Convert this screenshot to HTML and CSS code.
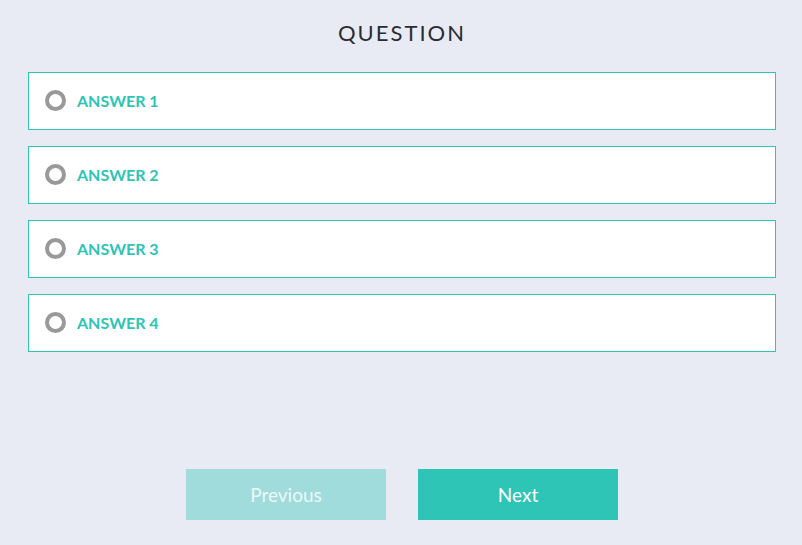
FILE: index.html
```html
<!DOCTYPE html>
<html lang="en">
<head>
    <meta charset="UTF-8">
    <title>Quiz</title>
    <link rel="stylesheet" href="styles.css">
</head>
<body>
    <div class="quiz">
        <h1 class="question">Question</h1>

        <div class="answers">
            <label class="answer">
                <span class="radio"></span>
                <span class="answer-text">Answer 1</span>
            </label>
            <label class="answer">
                <span class="radio"></span>
                <span class="answer-text">Answer 2</span>
            </label>
            <label class="answer">
                <span class="radio"></span>
                <span class="answer-text">Answer 3</span>
            </label>
            <label class="answer">
                <span class="radio"></span>
                <span class="answer-text">Answer 4</span>
            </label>
        </div>

        <div class="nav">
            <button class="btn btn-prev">Previous</button>
            <button class="btn btn-next">Next</button>
        </div>
    </div>
</body>
</html>
```

FILE: styles.css
```css
body {
    margin: 0;
    background: #e8ebf3;
    font-family: Lato, "Open Sans", sans-serif;
}
.quiz {
    padding: 19px 26px 0 28px;
}
.question {
    margin: 0;
    text-align: center;
    font-size: 22px;
    font-weight: 400;
    letter-spacing: 2px;
    text-transform: uppercase;
    color: #2b2b33;
    line-height: 28px;
}
.answers {
    margin-top: 25px;
    display: flex;
    flex-direction: column;
    gap: 16px;
}
.answer {
    display: flex;
    align-items: center;
    height: 56px;
    background: white;
    border: 1px solid #2ec4b6;
    padding-left: 16px;
    cursor: pointer;
}
.radio {
    width: 13px;
    height: 13px;
    border: 4px solid #999;
    border-radius: 50%;
    margin-right: 11px;
    margin-top: -1px;
}
.answer-text {
    color: #2ec4b6;
    font-weight: 700;
    font-size: 16px;
    text-transform: uppercase;
    margin-top: -2px;
}
.nav {
    margin-top: 117px;
    display: flex;
    justify-content: center;
    gap: 32px;
}
.btn {
    width: 200px;
    height: 51px;
    border: none;
    color: white;
    font-family: Lato, "Open Sans", sans-serif;
    font-size: 19px;
    cursor: pointer;
}
.btn-prev {
    background: #a0dcdc;
    color: #eef8f8;
}
.btn-next {
    background: #2ec4b6;
}
```
